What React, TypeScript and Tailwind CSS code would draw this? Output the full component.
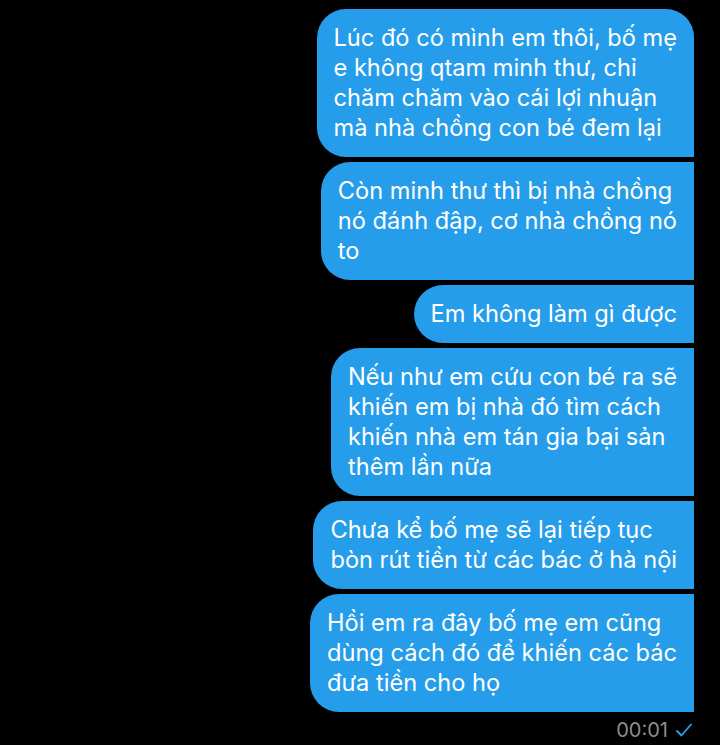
const messages: { lines: string[]; first?: boolean; last?: boolean }[] = [
  {
    lines: [
      'Lúc đó có mình em thôi, bố mẹ',
      'e không qtam minh thư, chỉ',
      'chăm chăm vào cái lợi nhuận',
      'mà nhà chồng con bé đem lại',
    ],
    first: true,
  },
  { lines: ['Còn minh thư thì bị nhà chồng', 'nó đánh đập, cơ nhà chồng nó', 'to'] },
  { lines: ['Em không làm gì được'] },
  {
    lines: [
      'Nếu như em cứu con bé ra sẽ',
      'khiến em bị nhà đó tìm cách',
      'khiến nhà em tán gia bại sản',
      'thêm lần nữa',
    ],
  },
  { lines: ['Chưa kể bố mẹ sẽ lại tiếp tục', 'bòn rút tiền từ các bác ở hà nội'] },
  {
    lines: ['Hồi em ra đây bố mẹ em cũng', 'dùng cách đó để khiến các bác', 'đưa tiền cho họ'],
    last: true,
  },
];

export default function App() {
  return (
    <div
      className="w-[720px] h-[745px] bg-black overflow-hidden flex flex-col items-end pt-[9px] pr-[26px]"
      style={{ fontFamily: 'Inter, "Noto Sans", sans-serif' }}
    >
      <div className="flex flex-col items-end gap-[5px]">
        {messages.map((m, i) => (
          <div
            key={i}
            className={
              'bg-[#259dea] text-white text-[23.6px] leading-[30px] px-[17px] py-[14px] rounded-l-[29px] whitespace-nowrap ' +
              (m.first ? 'rounded-tr-[28px]' : '')
            }
          >
            {m.lines.map((l, j) => (
              <div key={j}>{l}</div>
            ))}
          </div>
        ))}
      </div>
      <div className="flex items-center gap-[8px] mt-[6px] pr-[2px] text-[20px] leading-[24px] text-[#8d8d8d]">
        <span>00:01</span>
        <svg width="16" height="14" viewBox="0 0 16 14" fill="none">
          <path d="M1 8l4.5 4.5L15 1.5" stroke="#2aa1ec" strokeWidth="1.8" strokeLinecap="round" strokeLinejoin="round" />
        </svg>
      </div>
    </div>
  );
}
